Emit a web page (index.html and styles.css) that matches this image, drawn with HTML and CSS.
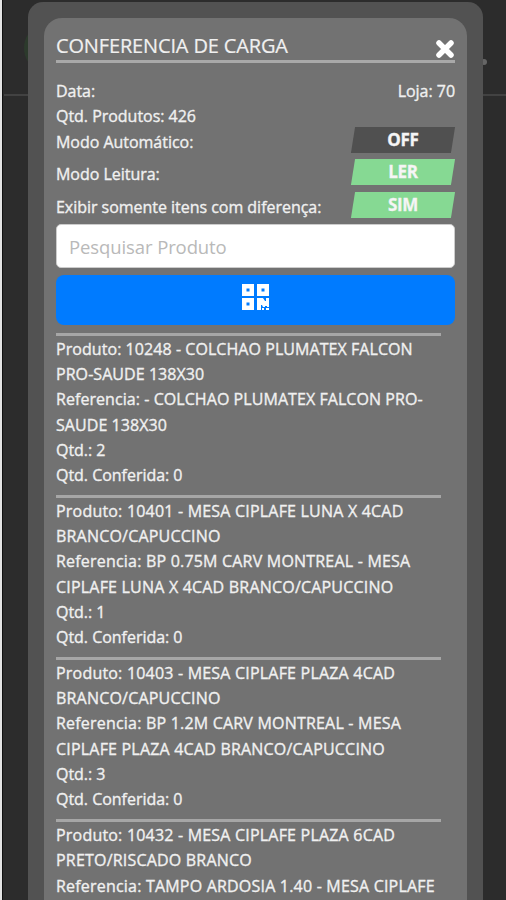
FILE: index.html
```html
<!DOCTYPE html>
<html lang="pt-BR">
<head>
<meta charset="utf-8">
<title>Conferencia de Carga</title>
<link rel="stylesheet" href="styles.css">
</head>
<body>
<div class="page">
  <div class="accent"></div>
  <div class="navline"></div>
  <div class="dot"></div>
  <div class="modal">
    <main class="panel">
      <header class="header">
        <h1>CONFERENCIA DE CARGA</h1>
        <svg class="close" viewBox="0 0 20 20"><path d="M4 4L16 16M16 4L4 16"/></svg>
      </header>
      <div class="info"><span>Data:</span><span>Loja: 70</span></div>
      <div class="info count"><span>Qtd. Produtos: 426</span></div>
      <div class="option"><span>Modo Automático:</span><button class="toggle off"><span>OFF</span></button></div>
      <div class="option"><span>Modo Leitura:</span><button class="toggle"><span>LER</span></button></div>
      <div class="option"><span>Exibir somente itens com diferença:</span><button class="toggle"><span>SIM</span></button></div>
      <input class="search" type="text" placeholder="Pesquisar Produto">
      <button class="scan">
        <svg viewBox="0 0 27 26"><path fill-rule="evenodd" d="M0 0h12v12H0zM4.5 4.500v3h3v-3zM15 0h12v12H15zM19.500 4.500v3h3v-3zM0 14h12v12H0zM4.500 18.500v3h3v-3zM15 14h6l2 3h1v-3h3v9h-2v-1h-2v1h-2l-1-2h-1v5h-4zM20 24h2v2h-2zM24 24h3v2h-3z"/></svg>
      </button>
      <section class="list">
        <article>
          <p class="name">Produto: 10248 - COLCHAO PLUMATEX FALCON<br>PRO-SAUDE 138X30</p>
          <p class="name">Referencia: - COLCHAO PLUMATEX FALCON PRO-<br>SAUDE 138X30</p>
          <p>Qtd.: 2</p>
          <p>Qtd. Conferida: 0</p>
        </article>
        <article>
          <p class="name wide">Produto: 10401 - MESA CIPLAFE LUNA X 4CAD<br>BRANCO/CAPUCCINO</p>
          <p class="name wide">Referencia: BP 0.75M CARV MONTREAL - MESA<br>CIPLAFE LUNA X 4CAD BRANCO/CAPUCCINO</p>
          <p>Qtd.: 1</p>
          <p>Qtd. Conferida: 0</p>
        </article>
        <article>
          <p class="name wide">Produto: 10403 - MESA CIPLAFE PLAZA 4CAD<br>BRANCO/CAPUCCINO</p>
          <p class="name wide">Referencia: BP 1.2M CARV MONTREAL - MESA<br>CIPLAFE PLAZA 4CAD BRANCO/CAPUCCINO</p>
          <p>Qtd.: 3</p>
          <p>Qtd. Conferida: 0</p>
        </article>
        <article>
          <p class="name wide">Produto: 10432 - MESA CIPLAFE PLAZA 6CAD<br>PRETO/RISCADO BRANCO</p>
          <p class="name wide">Referencia: TAMPO ARDOSIA 1.40 - MESA CIPLAFE</p>
        </article>
      </section>
    </main>
  </div>
</div>
</body>
</html>
```
FILE: styles.css
```css
* { box-sizing: border-box; }
body {
  margin: 0;
  background: #2c2c2c;
  color: #f0f0f0;
  font: 400 16px/25.3px "Open Sans", "Noto Sans", sans-serif;
  letter-spacing: -0.03px;
  -webkit-text-stroke: 0.35px #f0f0f0;
}
.page {
  position: relative;
  height: 900px;
  overflow: hidden;
  padding: 2px 23px 0 26px;
  border-left: 2px solid #e4e4e4;
  box-shadow: inset 1px 0 #111;
}
.accent {
  position: absolute;
  left: 22px;
  top: 28px;
  width: 30px;
  height: 40px;
  border-radius: 50%;
  background: #2c3a2c;
}
.navline {
  position: absolute;
  left: 2px;
  right: 0;
  top: 94px;
  height: 2px;
  background: #424242;
}
.dot {
  position: absolute;
  right: 19px;
  top: 59px;
  width: 6px;
  height: 6px;
  border-radius: 50%;
  background: #666;
}
.modal {
  position: relative;
  height: 920px;
  padding: 16px 16px 0;
  border-radius: 15px;
  background: #525252;
}
.panel {
  height: 904px;
  padding: 13px 12px 0;
  border-radius: 18px 18px 0 0;
  background: #727272;
}
.header {
  display: flex;
  justify-content: space-between;
  height: 32px;
  margin-bottom: 16px;
  border-bottom: 3px solid #a9a9a9;
}
h1 {
  margin: 0;
  font-size: 20px;
  font-weight: 400;
  line-height: 29px;
  letter-spacing: -0.15px;
  -webkit-text-stroke-width: 0.2px;
}
.close {
  width: 20px;
  height: 20px;
  margin-top: 8px;
  overflow: visible;
}
.close path {
  fill: none;
  stroke: #fff;
  stroke-width: 5.5;
  stroke-linecap: round;
}
.info {
  display: flex;
  justify-content: space-between;
  height: 25px;
}
.count { height: 23px; }
.option {
  display: flex;
  justify-content: space-between;
  height: 32.4px;
  line-height: 30px;
}
.toggle {
  width: 100px;
  height: 26px;
  margin-right: 2px;
  padding: 0;
  border: 0;
  transform: skewX(-9deg);
  background: #86d993;
  color: #f6f6f6;
  font: 700 17px/26px "Open Sans", sans-serif;
  letter-spacing: -0.3px;
}
.toggle span {
  display: block;
  transform: skewX(9deg);
}
.off { background: #505050; }
.search {
  display: block;
  width: 100%;
  height: 44px;
  margin: 0 0 7px;
  padding: 0 12px;
  border: 1px solid #ccc;
  border-radius: 5px;
  background: #fff;
  font: 400 18.5px "Open Sans", sans-serif;
  letter-spacing: -0.1px;
  -webkit-text-stroke: 0;
}
.search::placeholder { color: #b9b9b9; }
.scan {
  display: flex;
  justify-content: center;
  width: 100%;
  height: 50px;
  padding: 9px 0 0;
  border: 0;
  border-radius: 8px;
  background: #007bff;
}
.scan svg {
  width: 27px;
  height: 26px;
  fill: #fff;
}
.list {
  width: 385px;
  margin-top: 7.5px;
}
article {
  height: 162.1px;
  border-top: 3px solid #a6a6a6;
  padding-top: 1px;
}
p {
  margin: 0;
  white-space: nowrap;
}
.name { letter-spacing: 0.06px; }
.wide { letter-spacing: 0.2px; }
```
